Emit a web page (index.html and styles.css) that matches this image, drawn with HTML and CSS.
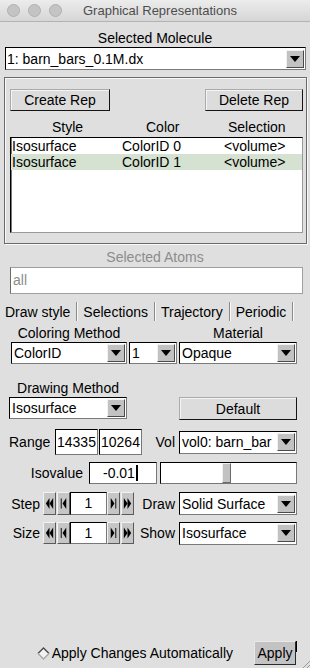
FILE: index.html
```html
<!DOCTYPE html>
<html lang="en">
<head>
    <meta charset="UTF-8">
    <meta name="viewport" content="width=device-width, initial-scale=1.0">
    <title>Graphical Representations</title>
    <link rel="stylesheet" href="styles.css">
</head>
<body>
    <div class="titlebar">
        <div class="lights"><span></span><span></span><span></span></div>
        <div class="title">Graphical Representations</div>
    </div>

    <div class="caption first">Selected Molecule</div>
    <div class="select molecule"><span class="select-value">1: barn_bars_0.1M.dx</span><span class="select-btn"></span></div>

    <div class="frame">
        <div class="rep-buttons">
            <button class="btn create">Create Rep</button>
            <button class="btn delete">Delete Rep</button>
        </div>
        <div class="rep-head"><span>Style</span><span>Color</span><span>Selection</span></div>
        <div class="rep-list">
            <div class="rep-row"><span>Isosurface</span><span>ColorID 0</span><span>&lt;volume&gt;</span></div>
            <div class="rep-row selected"><span>Isosurface</span><span>ColorID 1</span><span>&lt;volume&gt;</span></div>
        </div>
    </div>

    <div class="caption disabled">Selected Atoms</div>
    <div class="atoms">all</div>

    <div class="tabs">
        <div class="tab active">Draw style</div>
        <div class="tab">Selections</div>
        <div class="tab">Trajectory</div>
        <div class="tab">Periodic</div>
    </div>

    <div class="grid-color labels">
        <div class="lbl">Coloring Method</div>
        <div></div>
        <div class="lbl">Material</div>
    </div>
    <div class="grid-color controls">
        <div class="select"><span class="select-value">ColorID</span><span class="select-btn"></span></div>
        <div class="select"><span class="select-value">1</span><span class="select-btn"></span></div>
        <div class="select"><span class="select-value">Opaque</span><span class="select-btn"></span></div>
    </div>

    <div class="grid-draw labels">
        <div class="lbl">Drawing Method</div>
    </div>
    <div class="grid-draw controls tall">
        <div class="select"><span class="select-value">Isosurface</span><span class="select-btn"></span></div>
        <div></div>
        <button class="btn">Default</button>
    </div>

    <div class="row range">
        <span class="range-label">Range</span>
        <div class="field num">14335</div>
        <div class="field num second">10264</div>
        <span class="side-label">Vol</span>
        <div class="select side-select"><span class="select-value">vol0: barn_bar</span><span class="select-btn"></span></div>
    </div>

    <div class="row iso">
        <span class="iso-label">Isovalue</span>
        <div class="field iso-field">-0.01<span class="caret"></span></div>
        <div class="slider"><span class="thumb"></span></div>
    </div>

    <div class="row step">
        <span class="step-label">Step</span>
        <div class="stepper">
            <span class="arrow-btn"><svg width="12" height="21" viewBox="0 0 12 21"><polygon points="2,10.5 6,4.5 6,16.5"/><polygon points="6,10.5 10,4.5 10,16.5"/></svg></span>
            <span class="arrow-btn"><svg width="12" height="21" viewBox="0 0 12 21"><polygon points="5,10.5 9,4.5 9,16.5"/><rect x="3" y="5" width="1" height="11"/></svg></span>
            <div class="field stepper-field">1</div>
            <span class="arrow-btn"><svg width="12" height="21" viewBox="0 0 12 21"><polygon points="7,10.5 3,4.5 3,16.5"/><rect x="8" y="5" width="1" height="11"/></svg></span>
            <span class="arrow-btn"><svg width="12" height="21" viewBox="0 0 12 21"><polygon points="10,10.5 6,4.5 6,16.5"/><polygon points="6,10.5 2,4.5 2,16.5"/></svg></span>
        </div>
        <span class="side-label wide">Draw</span>
        <div class="select side-select"><span class="select-value">Solid Surface</span><span class="select-btn"></span></div>
    </div>

    <div class="row step size">
        <span class="step-label">Size</span>
        <div class="stepper">
            <span class="arrow-btn"><svg width="12" height="20" viewBox="0 0 12 20"><polygon points="2,10 6,4 6,16"/><polygon points="6,10 10,4 10,16"/></svg></span>
            <span class="arrow-btn"><svg width="12" height="20" viewBox="0 0 12 20"><polygon points="5,10 9,4 9,16"/><rect x="3" y="4.5" width="1" height="11"/></svg></span>
            <div class="field stepper-field">1</div>
            <span class="arrow-btn"><svg width="12" height="20" viewBox="0 0 12 20"><polygon points="7,10 3,4 3,16"/><rect x="8" y="4.5" width="1" height="11"/></svg></span>
            <span class="arrow-btn"><svg width="12" height="20" viewBox="0 0 12 20"><polygon points="10,10 6,4 6,16"/><polygon points="6,10 2,4 2,16"/></svg></span>
        </div>
        <span class="side-label wide">Show</span>
        <div class="select side-select"><span class="select-value">Isosurface</span><span class="select-btn"></span></div>
    </div>

    <div class="footer">
        <label class="auto">
            <svg class="diamond" width="13" height="13" viewBox="0 0 13 13">
                <polygon points="6.5,1 12,6.5 6.5,12 1,6.5" fill="#f2f2f2"/>
                <polyline points="1,6.5 6.5,1 12,6.5" fill="none" stroke="#4a4a4a" stroke-width="1.4"/>
                <polyline points="1,6.5 6.5,12 12,6.5" fill="none" stroke="#a8a8a8" stroke-width="1.4"/>
            </svg>
            Apply Changes Automatically
        </label>
        <button class="apply">Apply</button>
        <span class="focus-mark"></span>
    </div>

    <svg class="grip" width="10" height="10" viewBox="0 0 10 10">
        <line x1="3" y1="10" x2="10" y2="3" stroke="#9a9a9a"/>
        <line x1="7" y1="10" x2="10" y2="7" stroke="#9a9a9a"/>
    </svg>
</body>
</html>
```

FILE: styles.css
```css
body {
    font-family: 'Liberation Sans', Arial, sans-serif;
    font-size: 14px;
    color: #000;
    margin: 0;
    width: 310px;
    height: 100vh;
    display: flex;
    flex-direction: column;
    background-color: #dfdfdf;
    overflow: hidden;
    position: relative;
}
.titlebar {
    height: 21px;
    display: flex;
    align-items: center;
    border-bottom: 1px solid #b3b3b3;
    background: linear-gradient(#ececec, #d6d6d6);
    flex-shrink: 0;
}
.lights {
    display: flex;
    gap: 8px;
    padding-left: 7px;
}
.lights span {
    width: 11px;
    height: 11px;
    border-radius: 50%;
    background-color: #c4c4c4;
    border: 1px solid #b0b0b0;
}
.title {
    font-size: 13px;
    color: #4d4d4d;
    margin-left: 21px;
}
.caption {
    line-height: 16px;
    height: 16px;
    text-align: center;
}
.caption.first {
    margin-top: 8px;
}
.caption.disabled {
    margin-top: 5px;
    color: #8c8c8c;
}

/* option menus */
.select {
    display: flex;
    align-items: center;
    height: 22px;
    box-sizing: border-box;
    border: 1px solid #000;
    border-right-color: #7a7a7a;
    border-bottom-color: #7a7a7a;
    background-color: #fff;
    overflow: hidden;
}
.select-value {
    flex: 1;
    min-width: 0;
    padding-left: 2px;
    white-space: nowrap;
    overflow: hidden;
}
.select-btn {
    flex-shrink: 0;
    width: 18px;
    height: 18px;
    margin-right: 1px;
    box-sizing: border-box;
    display: flex;
    align-items: center;
    justify-content: center;
    background-color: #c2c2c2;
    border: 1px solid;
    border-color: #f2f2f2 #4a4a4a #4a4a4a #f2f2f2;
}
.select-btn::after {
    content: "";
    border-left: 5px solid transparent;
    border-right: 5px solid transparent;
    border-top: 6px solid #000;
}
.select.molecule {
    margin: 1px 4px 0 5px;
    height: 23px;
}
.select.molecule .select-value {
    padding-left: 1px;
}

/* buttons */
.btn {
    font-family: inherit;
    font-size: 14px;
    color: #000;
    height: 22px;
    padding: 0;
    background-color: #dcdcdc;
    border: 1px solid;
    border-color: #ababab #141414 #141414 #ababab;
    box-shadow: inset 1px 1px 0 #f4f4f4;
}

/* reps frame */
.frame {
    margin: 7px 3px 0 4px;
    padding: 11px 3px 10px 5px;
    border: 1px solid #6a6a6a;
    box-shadow: inset 1px 1px 0 #f8f8f8, 1px 1px 0 #f8f8f8;
}
.rep-buttons {
    display: flex;
    justify-content: space-between;
}
.btn.create {
    width: 100px;
}
.btn.delete {
    width: 98px;
}
.rep-head {
    margin-top: 8px;
    height: 16px;
    line-height: 16px;
    display: grid;
    grid-template-columns: 94px 82px 1fr;
    padding-left: 42px;
}
.rep-list {
    margin-top: 2px;
    height: 96px;
    box-sizing: border-box;
    background-color: #fff;
    border: 1px solid;
    border-color: #000 #9a9a9a #9a9a9a #000;
    box-shadow: inset 1px 0 0 #777;
}
.rep-row {
    height: 16px;
    line-height: 16px;
    display: grid;
    grid-template-columns: 110px 102px 1fr;
    padding-left: 1px;
}
.rep-row.selected {
    background-color: #d5e1d1;
}

/* selected atoms */
.atoms {
    margin: 2px 7px 0 10px;
    height: 27px;
    line-height: 25px;
    box-sizing: border-box;
    padding-left: 2px;
    color: #8c8c8c;
    background-color: #fff;
    border: 1px solid #a0a0a0;
    border-left-color: #6c6c6c;
}

/* tabs */
.tabs {
    margin-top: 8px;
    height: 19px;
    display: flex;
}
.tab {
    padding: 1px 6px 0 6px;
    line-height: 18px;
    border-right: 1px solid #8a8a8a;
    box-shadow: 1px 0 0 #fafafa;
}
.tab.active {
    padding-left: 5px;
}

/* draw style panel */
.grid-color {
    display: grid;
    grid-template-columns: 116px 48px 118px;
    column-gap: 2px;
    padding-left: 11px;
}
.grid-draw {
    display: grid;
    grid-template-columns: 118px 52px 118px;
    padding-left: 9px;
}
.labels {
    height: 16px;
    line-height: 16px;
}
.grid-color.labels {
    margin-top: 4px;
}
.grid-draw.labels {
    margin-top: 16px;
}
.lbl {
    text-align: center;
    white-space: nowrap;
}
.controls {
    margin-top: 1px;
    height: 22px;
}
.controls.tall {
    height: 23px;
}
.controls.tall .select {
    height: 22px;
}
.controls .btn {
    height: 23px;
}

.row {
    display: flex;
    align-items: center;
}
.field {
    box-sizing: border-box;
    background-color: #fff;
    border: 1px solid #000;
    border-right-color: #777;
    border-bottom-color: #777;
    white-space: nowrap;
    overflow: hidden;
}
.range {
    margin-top: 9px;
    height: 26px;
    padding-left: 9px;
}
.range-label {
    width: 46px;
}
.field.num {
    width: 43px;
    height: 26px;
    line-height: 24px;
    padding-left: 1px;
}
.field.num.second {
    margin-left: 1px;
}
.side-label {
    width: 37px;
    text-align: right;
    padding-right: 4px;
    box-sizing: border-box;
}
.side-label.wide {
    width: 45px;
}
.side-select {
    width: 118px;
    height: 23px;
}

.iso {
    margin-top: 7px;
    height: 22px;
}
.iso-label {
    width: 88px;
    text-align: right;
    padding-right: 5px;
    box-sizing: border-box;
}
.iso-field {
    margin-left: 1px;
    width: 68px;
    height: 22px;
    line-height: 20px;
    padding-left: 13px;
    display: flex;
    align-items: center;
}
.caret {
    width: 2px;
    height: 16px;
    margin-left: 1px;
    background-color: #000;
}
.slider {
    margin-left: 3px;
    width: 137px;
    height: 22px;
    box-sizing: border-box;
    background-color: #fff;
    border: 1px solid #000;
    border-right-color: #777;
    border-bottom-color: #777;
    padding-left: 61px;
    display: flex;
}
.thumb {
    width: 9px;
    height: 20px;
    box-sizing: border-box;
    background-color: #c2c2c2;
    border: 1px solid;
    border-color: #f0f0f0 #6a6a6a #6a6a6a #f0f0f0;
}

.step {
    margin-top: 8px;
    height: 23px;
}
.step.size {
    margin-top: 7px;
    height: 22px;
}
.step-label {
    width: 43px;
    text-align: right;
    padding-right: 3px;
    box-sizing: border-box;
}
.stepper {
    display: flex;
    height: 100%;
}
.arrow-btn {
    width: 13px;
    height: 100%;
    box-sizing: border-box;
    display: flex;
    align-items: center;
    justify-content: center;
    background-color: #c6c6c6;
    border: 1px solid;
    border-color: #f2f2f2 #5a5a5a #5a5a5a #f2f2f2;
}
.arrow-btn + .arrow-btn {
    margin-left: 1px;
}
.stepper-field {
    width: 37px;
    height: 100%;
    text-align: center;
    line-height: 21px;
}

/* bottom bar */
.footer {
    margin-top: auto;
    margin-bottom: 3px;
    height: 24px;
    display: flex;
    align-items: center;
    justify-content: flex-end;
    padding-right: 13px;
}
.auto {
    display: flex;
    align-items: center;
    gap: 2px;
}
.apply {
    margin-left: 21px;
    width: 42px;
    height: 24px;
    padding: 0;
    font-family: inherit;
    font-size: 14px;
    color: #000;
    background-color: #c3c3c3;
    border: 1px solid;
    border-color: #e8e8e8 #2a2a2a #2a2a2a #e8e8e8;
}
.focus-mark {
    align-self: flex-start;
    width: 1px;
    height: 11px;
    background-color: #000;
}
.grip {
    position: absolute;
    right: 0;
    bottom: 0;
}
```
